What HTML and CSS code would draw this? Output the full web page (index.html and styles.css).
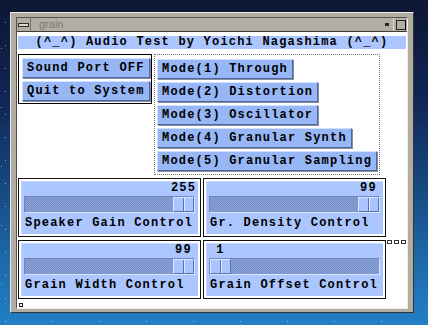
FILE: index.html
```html
<!DOCTYPE html>
<html>
<head>
<meta charset="utf-8">
<title>grain</title>
<link rel="stylesheet" href="styles.css">
</head>
<body>
<div class="window">
  <div class="inner">
    <div class="titlebar">
      <div class="menu-btn"><span class="bar"></span></div>
      <div class="title">grain</div>
      <div class="min-btn"><span></span></div>
      <div class="max-btn"><span></span></div>
    </div>
    <div class="client mono">
      <div class="banner">(^_^) Audio Test by Yoichi Nagashima (^_^)</div>
      <div class="top">
        <div class="box box-left">
          <div class="btn">Sound Port OFF</div>
          <div class="btn">Quit to System</div>
        </div>
        <div class="box box-right">
          <div class="btn">Mode(1) Through</div>
          <div class="btn">Mode(2) Distortion</div>
          <div class="btn">Mode(3) Oscillator</div>
          <div class="btn">Mode(4) Granular Synth</div>
          <div class="btn">Mode(5) Granular Sampling</div>
        </div>
      </div>
      <div class="sliders-row">
        <div class="sliders">
          <div class="scale">
            <div class="panel">
              <div class="value-row end"><span class="value">255</span></div>
              <div class="trough end"><div class="thumb"></div></div>
              <div class="label">Speaker Gain Control</div>
            </div>
          </div>
          <div class="scale">
            <div class="panel">
              <div class="value-row end"><span class="value">99</span></div>
              <div class="trough end"><div class="thumb"></div></div>
              <div class="label">Gr. Density Control</div>
            </div>
          </div>
          <div class="scale">
            <div class="panel">
              <div class="value-row end"><span class="value">99</span></div>
              <div class="trough end"><div class="thumb"></div></div>
              <div class="label">Grain Width Control</div>
            </div>
          </div>
          <div class="scale">
            <div class="panel">
              <div class="value-row start"><span class="value">1</span></div>
              <div class="trough start"><div class="thumb"></div></div>
              <div class="label">Grain Offset Control</div>
            </div>
          </div>
        </div>
        <div class="dots"><span></span><span></span><span></span></div>
      </div>
      <div class="corner"></div>
    </div>
  </div>
</div>
</body>
</html>
```
FILE: styles.css
```css
* { box-sizing: border-box; }
html, body { margin: 0; padding: 0; }
body {
  width: 428px;
  height: 325px;
  overflow: hidden;
  padding: 12px 0 0 10px;
  background-color: #0b1c48;
  background-image:
    radial-gradient(circle, rgba(255,255,255,0.85) 0.6px, transparent 1.1px),
    radial-gradient(circle, rgba(190,215,255,0.6) 0.5px, transparent 1px),
    radial-gradient(circle, rgba(255,255,255,0.5) 0.5px, transparent 1px),
    repeating-conic-gradient(rgba(255,255,255,0.05) 0 25%, transparent 0 50%),
    linear-gradient(180deg, #07112e 0%, #0b1f50 30%, #10457e 58%, #1766a8 80%, #1c7cc4 100%);
  background-size: 67px 43px, 31px 59px, 47px 23px, 2px 2px, 100% 100%;
  background-position: 7px 3px, 17px 19px, 29px 11px, 0 0, 0 0;
}
.window {
  width: 404px;
  height: 301px;
  border: 1px solid;
  border-color: #ece8e0 #34322e #34322e #ece8e0;
  background-color: #a9a59b;
  background-image: repeating-conic-gradient(rgba(255,255,255,0.18) 0 25%, transparent 0 50%);
  background-size: 2px 2px;
  padding: 4px 5px 3px 5px;
}
.inner {
  height: 100%;
  border: 1px solid;
  border-color: #55524b #f2eee6 #f2eee6 #55524b;
  display: flex;
  flex-direction: column;
}
.titlebar {
  height: 14px;
  display: flex;
  align-items: stretch;
  background-color: #b2aea5;
  border-bottom: 1px solid #3e3c37;
}
.menu-btn {
  width: 14px;
  display: flex;
  align-items: center;
  justify-content: center;
  border-right: 1px solid #77736b;
}
.menu-btn .bar {
  width: 11px;
  height: 4px;
  border: 1px solid #2e2c28;
  background: #dcd8d0;
}
.title {
  flex: 1;
  padding-left: 8px;
  font-family: "Liberation Sans", Arial, sans-serif;
  font-size: 11px;
  line-height: 13px;
  color: #7d7971;
}
.min-btn {
  width: 12px;
  display: flex;
  align-items: center;
  justify-content: center;
}
.min-btn span {
  width: 4px;
  height: 3px;
  background: #2a2824;
}
.max-btn {
  width: 14px;
  display: flex;
  align-items: center;
  justify-content: center;
  border-left: 1px solid #ddd9d1;
}
.max-btn span {
  width: 10px;
  height: 10px;
  border: 1px solid #2a2824;
  border-right-color: #000;
}
.mono {
  font-family: "Liberation Mono", "DejaVu Sans Mono", monospace;
  font-weight: bold;
  font-size: 12px;
  letter-spacing: 1.2px;
  color: #000;
}
.client {
  flex: 1;
  background: #ffffff;
  padding: 4px 1px 0 1px;
}
.banner {
  height: 13px;
  line-height: 13px;
  text-align: center;
  white-space: nowrap;
  background-color: #a4c1ff;
  background-image: repeating-conic-gradient(rgba(255,255,255,0.16) 0 25%, transparent 0 50%);
  background-size: 2px 2px;
}
.top {
  display: flex;
  align-items: flex-start;
  gap: 2px;
  margin-top: 5px;
}
.box {
  display: flex;
  flex-direction: column;
  align-items: flex-start;
  gap: 3px;
}
.box-left {
  width: 134px;
  border: 1px solid #000;
  padding: 3px 2px 2px 3px;
}
.box-right {
  width: 226px;
  border: 1px dotted #707070;
  padding: 4px 2px 3px 2px;
}
.btn {
  height: 20px;
  line-height: 18px;
  padding: 0 4px;
  white-space: nowrap;
  border: 1px solid;
  border-color: #d2e0ff #4d66a2 #4d66a2 #d2e0ff;
  background-color: #8fb1f5;
  background-image: repeating-conic-gradient(rgba(255,255,255,0.14) 0 25%, transparent 0 50%);
  background-size: 2px 2px;
  box-shadow: 1px 1px 0 #8a8f9c;
}
.sliders-row {
  display: flex;
  align-items: flex-start;
  margin-top: 3px;
}
.sliders {
  display: grid;
  grid-template-columns: 183px 183px;
  grid-template-rows: 59px 59px;
  column-gap: 2px;
  row-gap: 3px;
}
.scale {
  border: 1px solid #111;
  padding: 2px;
  background: #fff;
}
.panel {
  height: 100%;
  padding: 0 3px 0 2px;
  background-color: #a4c1ff;
  background-image: repeating-conic-gradient(rgba(255,255,255,0.16) 0 25%, transparent 0 50%);
  background-size: 2px 2px;
  border-top: 1px solid #c4d6ff;
  border-left: 1px solid #c4d6ff;
}
.value-row {
  display: flex;
  height: 13px;
  line-height: 13px;
  padding: 0 1px;
}
.value-row.end { justify-content: flex-end; }
.value-row.start { justify-content: flex-start; }
.value {
  width: 21px;
  display: flex;
  justify-content: center;
  white-space: nowrap;
}
.trough {
  display: flex;
  height: 17px;
  margin-top: 1px;
  border: 1px solid;
  border-color: #6f86bd #d9e5ff #d9e5ff #6f86bd;
  background-color: #8aa3d8;
  background-image: repeating-conic-gradient(rgba(60,80,130,0.25) 0 25%, transparent 0 50%);
  background-size: 2px 2px;
}
.trough.end { justify-content: flex-end; }
.trough.start { justify-content: flex-start; }
.thumb {
  width: 21px;
  height: 100%;
  border: 1px solid;
  border-color: #dbe6ff #5a73ad #5a73ad #dbe6ff;
  background-color: #a9c4ff;
  background-image: linear-gradient(90deg, transparent 9px, #5a73ad 9px, #5a73ad 10px, #e0eaff 10px, #e0eaff 11px, transparent 11px);
}
.label {
  margin-top: 4px;
  line-height: 13px;
  padding-left: 1px;
  white-space: nowrap;
}
.dots {
  display: flex;
  gap: 2px;
  margin-left: 1px;
  padding-top: 62px;
}
.dots span {
  width: 5px;
  height: 4px;
  border: 1px solid #333;
}
.corner {
  width: 4px;
  height: 4px;
  border: 1px solid #222;
  margin: 4px 0 0 1px;
}
```
